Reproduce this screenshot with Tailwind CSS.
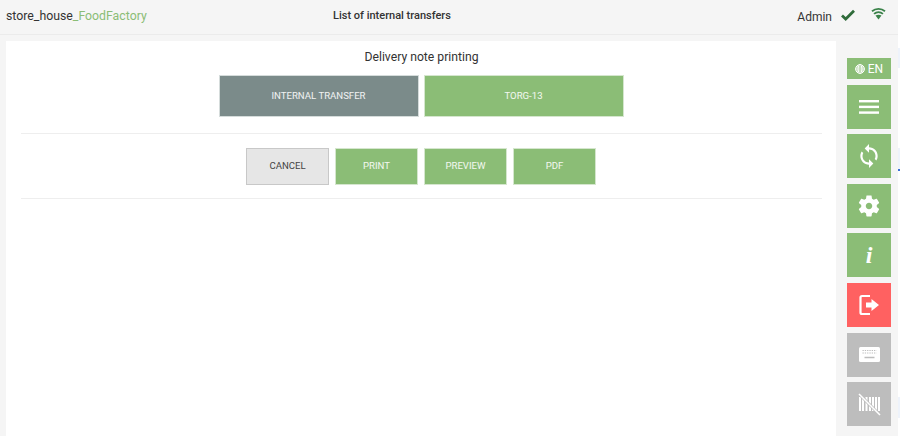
<!DOCTYPE html>
<html>
<head>
    <title>Delivery note printing</title>
    <script src="https://cdn.jsdelivr.net/npm/@tailwindcss/browser@4"></script>
</head>
<body class="relative w-[900px] h-[436px] overflow-hidden bg-[#f5f5f5] font-['Roboto',sans-serif] text-[#333]">
    <!-- header -->
    <header class="h-[35px] border-b border-[#ebebeb] flex items-center">
        <div class="w-[333px] pl-[6px] text-[12.3px] mb-[2px]">store_house<span class="text-[#8bbd76]">_FoodFactory</span></div>
        <div class="text-[11px] font-medium mb-[2px]">List of internal transfers</div>
        <div class="ml-auto flex items-center">
            <span class="text-[12px] mr-[9px] mb-[1px]">Admin</span>
            <svg class="w-[14px] h-[12px] mr-[16px] mb-[4px]" viewBox="0 0 14 12"><path d="M1 6.500l3.700 3.500L13 1.800" fill="none" stroke="#2f6b3a" stroke-width="2.800"/></svg>
            <svg class="w-[15px] h-[13px] mr-[14px] mb-[7px]" viewBox="0 0 16 14" fill="none" stroke="#3a8249" stroke-width="1.900"><path d="M1 4.600c4-3.600 10-3.600 14 0M3.200 7.500c2.800-2.500 6.800-2.500 9.600 0"/><path d="M4.800 9.200c2-1.200 4.400-1.200 6.400 0L8 13.500z" fill="#3a8249" stroke="none"/></svg>
        </div>
    </header>

    <div class="flex pt-[6px]">
        <!-- main panel -->
        <main class="ml-[6px] w-[830px] h-[395px] bg-white pl-[15px] pr-[14px]">
            <h1 class="text-center text-[12.2px] text-[#333] pt-[8px] leading-[16px]">Delivery note printing</h1>
            <div class="flex justify-center gap-[5px] mt-[10px] pb-[16px] pr-[1px] border-b border-[#eee]">
                <button class="w-[200px] h-[42px] bg-[#7b8b8a] border border-[#d5dcdb] text-white/90 text-[9.6px]">INTERNAL TRANSFER</button>
                <button class="w-[200px] h-[42px] bg-[#8bbd76] border border-[#d5e6ce] text-white/90 text-[9.6px]">TORG-13</button>
            </div>
            <div class="flex justify-center gap-[6px] pt-[14px] pb-[13px] pr-[1px] border-b border-[#eee]">
                <button class="w-[83px] h-[37px] bg-[#e6e6e6] border border-[#c8c8c8] text-[#444] text-[9.6px]">CANCEL</button>
                <button class="w-[83px] h-[37px] bg-[#8bbd76] border border-[#d5e6ce] text-white/90 text-[9.6px]">PRINT</button>
                <button class="w-[83px] h-[37px] bg-[#8bbd76] border border-[#d5e6ce] text-white/90 text-[9.6px]">PREVIEW</button>
                <button class="w-[83px] h-[37px] bg-[#8bbd76] border border-[#d5e6ce] text-white/90 text-[9.6px]">PDF</button>
            </div>
        </main>

        <!-- side buttons -->
        <aside class="ml-[11px] w-[44px] pt-[17px] flex flex-col gap-[5.6px]">
            <button class="h-[21px] bg-[#8bbd76] text-white text-[12px] flex items-center justify-center gap-[3px]">
                <svg class="w-[10px] h-[10px]" viewBox="0 0 10 10" fill="none" stroke="#fff" stroke-width="1"><circle cx="5" cy="5" r="4.400"/><ellipse cx="5" cy="5" rx="2" ry="4.400"/><path d="M.6 5h8.800M1.200 3h7.600M1.200 7h7.600"/></svg>
                EN
            </button>
            <button class="h-[44px] bg-[#8bbd76] flex items-center justify-center">
                <svg class="w-[20px] h-[14px]" viewBox="0 0 20 14" fill="#fff"><rect y="0" width="20" height="2.400"/><rect y="5.700" width="20" height="2.400"/><rect y="11.400" width="20" height="2.400"/></svg>
            </button>
            <button class="h-[44px] bg-[#8bbd76] flex items-center justify-center">
                <svg class="w-[26px] h-[26px]" viewBox="0 0 24 24" fill="#fff"><path d="M12 4V1L8 5l4 4V6c3.310 0 6 2.690 6 6 0 1.010-.25 1.970-.7 2.800l1.460 1.460C19.540 15.030 20 13.570 20 12c0-4.420-3.580-8-8-8zm0 14c-3.310 0-6-2.690-6-6 0-1.010.25-1.970.7-2.800L5.240 7.740C4.460 8.970 4 10.430 4 12c0 4.420 3.580 8 8 8v3l4-4-4-4v3z"/></svg>
            </button>
            <button class="h-[44px] bg-[#8bbd76] flex items-center justify-center">
                <svg class="w-[26px] h-[26px]" viewBox="0 0 24 24" fill="#fff"><path d="M19.140 12.940c.04-.3.06-.61.06-.94 0-.32-.02-.64-.07-.94l2.030-1.580c.18-.14.23-.41.12-.61l-1.920-3.320c-.12-.22-.37-.29-.59-.22l-2.390.96c-.5-.38-1.030-.7-1.620-.94l-.36-2.540c-.04-.24-.24-.41-.48-.41h-3.840c-.24 0-.43.17-.47.41l-.36 2.540c-.59.24-1.130.57-1.620.94l-2.390-.96c-.22-.08-.47 0-.59.22L2.740 8.870c-.12.21-.08.47.12.61l2.030 1.580c-.05.3-.09.63-.09.94s.02.64.07.94l-2.030 1.580c-.18.14-.23.41-.12.61l1.920 3.320c.12.22.37.29.59.22l2.390-.96c.5.38 1.030.7 1.620.94l.36 2.540c.05.24.24.41.48.41h3.840c.24 0 .44-.17.47-.41l.36-2.540c.59-.24 1.130-.56 1.620-.94l2.390.96c.22.08.47 0 .59-.22l1.920-3.320c.12-.22.07-.47-.12-.61l-2.010-1.580zM12 15c-1.650 0-3-1.350-3-3s1.350-3 3-3 3 1.350 3 3-1.350 3-3 3z"/></svg>
            </button>
            <button class="h-[44px] bg-[#8bbd76] text-white text-[24px] font-['Liberation_Serif',serif] italic font-bold flex items-center justify-center">i</button>
            <button class="h-[44px] bg-[#ff6161] flex items-center justify-center">
                <svg class="w-[20px] h-[22px]" viewBox="0 0 20 22" fill="none"><path d="M11 2H3A1.500 1.500 0 0 0 1.500 3.500v15A1.500 1.500 0 0 0 3 20h8" stroke="#fff" stroke-width="2.200"/><path d="M7 8.500h5.500V5L20 11l-7.500 6v-3.500H7z" fill="#fff"/></svg>
            </button>
            <button class="h-[44px] bg-[#bdbdbd] flex items-center justify-center">
                <svg class="w-[21px] h-[15px]" viewBox="0 0 21 15"><rect width="21" height="15" rx="1.500" fill="#fff"/><path d="M3.500 3.500h14M3.500 6h14" stroke="#bdbdbd" stroke-width="1.200" stroke-dasharray="1.300 1"/><path d="M5.500 10.500h10" stroke="#bdbdbd" stroke-width="1.500"/></svg>
            </button>
            <button class="h-[44px] bg-[#bdbdbd] flex items-center justify-center">
                <svg class="w-[23px] h-[23px]" viewBox="0 0 23 23"><path d="M2 4v14M5 4v14M8.500 4v14M12 4v14M15 4v14M18 4v14M21 4v14" stroke="#fff" stroke-width="2"/><path d="M1 1l21 21" stroke="#bdbdbd" stroke-width="3"/><path d="M1 1l21 21" stroke="#fff" stroke-width="1.600"/></svg>
            </button>
        </aside>
    </div>

    <!-- sliver of the page behind, showing at the right edge -->
    <div class="absolute top-0 right-0 w-[2px] h-[436px] bg-white flex flex-col">
        <div class="h-[48px] shrink-0"></div>
        <div class="h-[20px] shrink-0 bg-[#eef3fb]"></div>
        <div class="h-[80px] shrink-0"></div>
        <div class="h-[21px] shrink-0 bg-[#eef3fb]"></div>
        <div class="h-[2px] shrink-0 bg-[#3a6fd8]"></div>
        <div class="h-[226px] shrink-0"></div>
        <div class="h-[21px] shrink-0 bg-[#eef3fb]"></div>
    </div>
</body>
</html>
